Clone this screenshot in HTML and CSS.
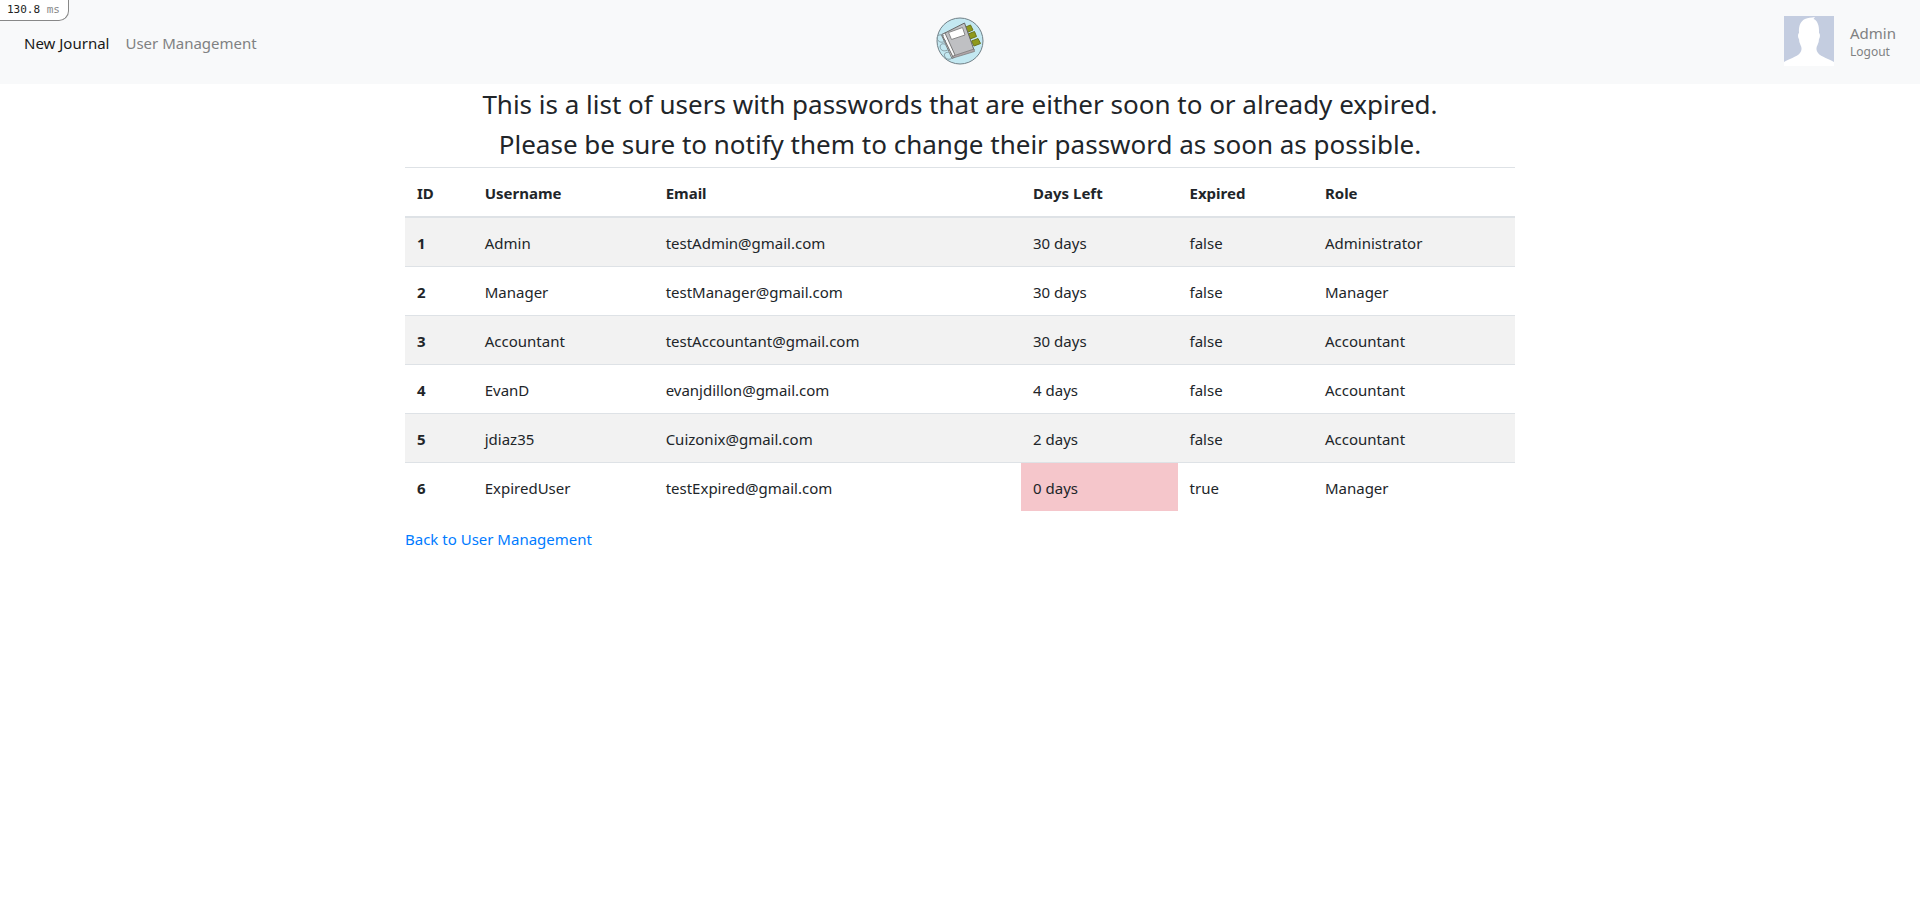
FILE: index.html
```html
<!DOCTYPE html>
<html lang="en">
<head>
<meta charset="utf-8">
<meta name="viewport" content="width=device-width, initial-scale=1">
<title>Expired Passwords</title>
<link rel="stylesheet" href="styles.css">
</head>
<body>
<div class="profiler">130.8 <span class="profiler-unit">ms</span></div>
<nav class="navbar">
  <div class="nav-links">
    <a class="nav-link active" href="#">New Journal</a>
    <a class="nav-link" href="#">User Management</a>
  </div>
  <a class="brand" href="#" aria-label="Home">
    <svg class="logo" viewBox="0 0 48 48" aria-hidden="true">
      <circle cx="24" cy="24" r="23" fill="#c3e8f1" stroke="#6f7f86" stroke-width="1"/>
      <g fill="#8f9a1c" stroke="#6b741a" stroke-width="1">
        <path d="M28.500 10.500l6-2.500 2.500 5-6 2.500zM32 17l6.500-2.500 2 5-6.500 2.500zM35.500 24l6.500-2.500 2.500 5-6.500 2.500z"/>
      </g>
      <path d="M5.500 18l5-2.500 9 24-3.500 2z" fill="#fff" stroke="#777" stroke-width="1"/>
      <path d="M6 17.500L28.500 6 38 33l-21 7z" fill="#bfc0c3" stroke="#666" stroke-width="1"/>
      <path d="M6 17.500l3-1.500L19 38l-2 2z" fill="#fafafa" stroke="#777" stroke-width="1"/>
      <path d="M12.500 15.500l14-5 2.500 7.500-13.500 4.500z" fill="#fff" stroke="#888" stroke-width="1"/>
      <path d="M17 39l21-7 .5 2.500L17 41z" fill="#b0a5a8" stroke="#777" stroke-width=".7"/>
      <g fill="none" stroke="#879da5" stroke-width="1">
        <path d="M8 19c-4-3-8 0-6.500 3.500S8 26 10 23M10 28c-4-3-7 0-5.500 3.500S11 34 13 32M14 36c-4-2-7 1-5 4s6 3 8 0"/>
      </g>
    </svg>
  </a>
  <div class="account">
    <svg class="avatar" viewBox="0 0 50 50" role="img" aria-label="Profile picture">
      <rect width="50" height="50" fill="#c4cde0"/>
      <path d="M0 50v-4c4-3 13-5 16-9 2-3 2-5 .5-8-1-2-1.500-4-1.500-6-1-1-1.500-5 0-6C14.500 9 17 5 21 3c3-1.500 6-1 10-2l-1.500 2C33 4 35.500 9 35 17c1.500 1 1 5 0 6 0 2-.5 4-1.500 6-1.500 3-1.500 5 .5 8 3 4 12 6 16 9v4z" fill="#fff"/>
    </svg>
    <div class="account-text">
      <a class="account-name" href="#">Admin</a>
      <a class="logout" href="#">Logout</a>
    </div>
  </div>
</nav>
<main class="container">
  <h1 class="heading">This is a list of users with passwords that are either soon to or already expired.<br>Please be sure to notify them to change their password as soon as possible.</h1>
  <table class="users">
    <colgroup><col class="c-id"><col class="c-user"><col class="c-email"><col class="c-days"><col class="c-expired"><col class="c-role"></colgroup>
    <thead>
      <tr><th scope="col">ID</th><th scope="col">Username</th><th scope="col">Email</th><th scope="col">Days Left</th><th scope="col">Expired</th><th scope="col">Role</th></tr>
    </thead>
    <tbody>
      <tr><th scope="row">1</th><td>Admin</td><td>testAdmin@gmail.com</td><td>30 days</td><td>false</td><td>Administrator</td></tr>
      <tr><th scope="row">2</th><td>Manager</td><td>testManager@gmail.com</td><td>30 days</td><td>false</td><td>Manager</td></tr>
      <tr><th scope="row">3</th><td>Accountant</td><td>testAccountant@gmail.com</td><td>30 days</td><td>false</td><td>Accountant</td></tr>
      <tr><th scope="row">4</th><td>EvanD</td><td>evanjdillon@gmail.com</td><td>4 days</td><td>false</td><td>Accountant</td></tr>
      <tr><th scope="row">5</th><td>jdiaz35</td><td>Cuizonix@gmail.com</td><td>2 days</td><td>false</td><td>Accountant</td></tr>
      <tr><th scope="row">6</th><td>ExpiredUser</td><td>testExpired@gmail.com</td><td class="danger">0 days</td><td>true</td><td>Manager</td></tr>
    </tbody>
  </table>
  <a class="back" href="#">Back to User Management</a>
</main>
</body>
</html>
```
FILE: styles.css
```css
* {
  box-sizing: border-box;
}

body {
  margin: 0;
  background: #fff;
  color: #212529;
  font-family: "Noto Sans", "Open Sans", sans-serif;
  font-size: 15px;
  line-height: 24px;
}

a {
  text-decoration: none;
}

.profiler {
  position: absolute;
  top: 0;
  left: 0;
  padding: 0 8px 0 7px;
  border: solid #888;
  border-width: 0 1px 1px 0;
  border-radius: 0 0 10px 0;
  background: #fff;
  color: #222;
  font-family: "DejaVu Sans Mono", monospace;
  font-size: 11px;
  line-height: 20px;
}

.profiler-unit {
  color: #888;
}

.navbar {
  display: flex;
  align-items: center;
  min-height: 84px;
  padding: 8px 24px 10px;
  background: #f8f9fa;
}

.nav-links {
  display: flex;
  flex: 1;
  gap: 16px;
  padding-top: 4px;
}

.nav-link,
.account-name,
.logout {
  color: #808182;
}

.nav-link.active {
  color: #191919;
}

.brand,
.logo,
.avatar {
  display: block;
}

.logo {
  width: 48px;
  height: 48px;
}

.account {
  display: flex;
  flex: 1;
  justify-content: flex-end;
  align-items: center;
  gap: 16px;
}

.avatar {
  width: 50px;
  height: 50px;
}

.account-text {
  display: flex;
  flex-direction: column;
  padding-top: 2px;
}

.account-name {
  line-height: 20px;
}

.logout {
  font-size: 12px;
  line-height: 18px;
}

.container {
  max-width: 1140px;
  margin: 0 auto;
  padding: 0 15px;
}

.heading {
  margin: 0;
  padding-bottom: 3px;
  font-size: 26px;
  font-weight: 400;
  line-height: 40px;
  text-align: center;
}

.users {
  width: 100%;
  margin-bottom: 16px;
  border-collapse: collapse;
  table-layout: fixed;
}

.users th,
.users td {
  padding: 13px 12px 11px;
  border-top: 1px solid #dee2e6;
  text-align: left;
}

.users thead th {
  border-bottom: 2px solid #dee2e6;
}

.users tbody tr:nth-child(odd) {
  background: #f2f2f2;
}

.users .danger {
  background: #f5c6cb;
}

.c-id { width: 6.1%; }
.c-user { width: 16.3%; }
.c-email { width: 33.1%; }
.c-days { width: 14.1%; }
.c-expired { width: 12.2%; }
.c-role { width: 18.2%; }

.back {
  color: #007bff;
}
```
